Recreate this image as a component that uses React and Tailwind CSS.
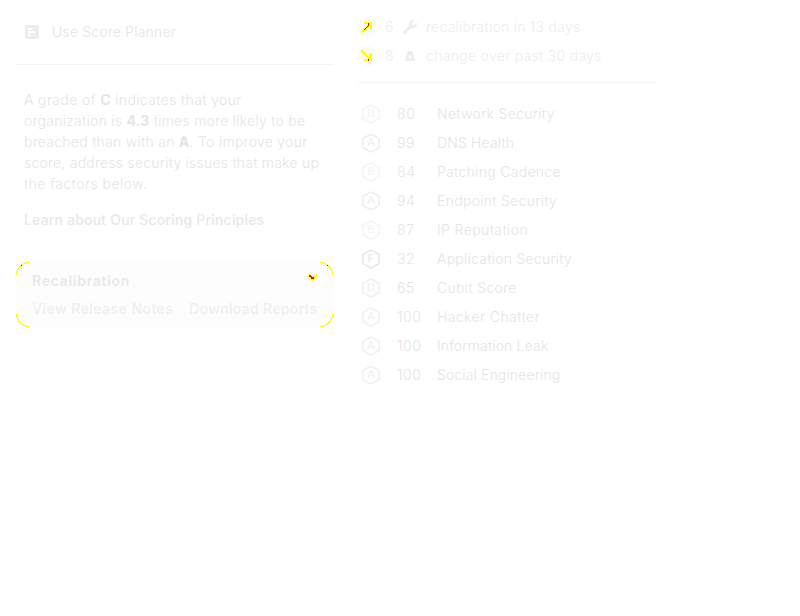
const factors = [
  { grade: 'B', score: 80, name: 'Network Security', tone: 'text-[#f5f5f5]', tracking: 'tracking-[0.3px]' },
  { grade: 'A', score: 99, name: 'DNS Health', tone: 'text-[#efefef]', tracking: 'tracking-[0.15px]' },
  { grade: 'B', score: 84, name: 'Patching Cadence', tone: 'text-[#f5f5f5]', tracking: 'tracking-[0.3px]' },
  { grade: 'A', score: 94, name: 'Endpoint Security', tone: 'text-[#efefef]', tracking: 'tracking-[0.3px]' },
  { grade: 'B', score: 87, name: 'IP Reputation', tone: 'text-[#f5f5f5]', tracking: 'tracking-[0.4px]' },
  { grade: 'F', score: 32, name: 'Application Security', tone: 'text-[#e9e9e9]', tracking: 'tracking-[0.25px]' },
  { grade: 'D', score: 65, name: 'Cubit Score', tone: 'text-[#f1f1f1]', tracking: 'tracking-[0.33px]' },
  { grade: 'A', score: 100, name: 'Hacker Chatter', tone: 'text-[#f1f1f1]', tracking: 'tracking-[0.4px]' },
  { grade: 'A', score: 100, name: 'Information Leak', tone: 'text-[#f1f1f1]', tracking: 'tracking-[0.16px]' },
  { grade: 'A', score: 100, name: 'Social Engineering', tone: 'text-[#f1f1f1]', tracking: 'tracking-[0.13px]' },
];

function GradeBadge({ grade, tone }) {
  return (
    <svg className={`h-5 w-[18px] tracking-normal ${tone}`} viewBox="0 0 18 20" fill="none">
      <path d="M9 1 17.1 5.5v9L9 19 .9 14.5v-9Z" stroke="currentColor" strokeWidth="1.6" strokeLinejoin="round" />
      <text transform="translate(9 13.4) scale(1.15 1)" textAnchor="middle" fontSize="10" fontWeight="500" fill="currentColor">{grade}</text>
    </svg>
  );
}

function Trend({ down }) {
  return (
    <svg className="h-5 w-5" viewBox="0 0 20 20" fill="none" shapeRendering="crispEdges">
      <circle cx="9.5" cy="10" r="9.8" fill="#fafafa" shapeRendering="auto" />
      <g transform={down ? 'matrix(1 0 0 -1 0 20)' : undefined}>
        <path d="M3.5 15.5 12.5 6.5" stroke="#ffff00" strokeWidth="2.4" />
        <path d="M6 5h8v8h-2V7H6Z" fill="#ffff00" />
        {down ? (
          <path d="M10 5h1v2h-1z" fill="#d60000" />
        ) : (
          <path d="M6 12h1v-1h1v-1h1V9h1V8h1v1h-1v1H9v1H8v1H7v1H6zM10 6h1v2h-1z" fill="#d60000" />
        )}
      </g>
    </svg>
  );
}

function CardCorners() {
  return (
    <svg className="pointer-events-none absolute inset-0 h-full w-full" viewBox="0 0 317 65" fill="none" stroke="#ffff00" strokeWidth="1.4" shapeRendering="crispEdges">
      <path d="M.5 13A12.5 12.5 0 0 1 13 .5M304 .5A12.5 12.5 0 0 1 316.5 13M316.5 52A12.5 12.5 0 0 1 304 64.5M13 64.5A12.5 12.5 0 0 1 .5 52" />
      <path d="M5 3h1v1H5zM311 3h1v1h-1z" fill="#b00000" stroke="none" />
    </svg>
  );
}

export default function App() {
  return (
    <main className="flex h-[616px] w-[800px] items-start overflow-hidden bg-white font-['Inter',sans-serif] text-[14px] font-light leading-[21px] tracking-[0.25px] text-[#e5e5e5]">
      <section className="ml-4 w-[317px]">
        <div className="flex h-16 items-center pl-2">
          <svg className="h-4 w-4" viewBox="0 0 16 16" fill="none">
            <rect x="1" y="1" width="14" height="14" rx="2" fill="#ededed" />
            <path d="M4.7 5h2.8M4.7 8h5.8M4.7 11h.9" stroke="white" strokeWidth="1.8" strokeLinecap="round" />
          </svg>
          <span className="-mt-px ml-3 tracking-[0.19px]">Use Score Planner</span>
        </div>
        <div className="h-px bg-[#f4f4f4]" />
        <p className="mt-6 whitespace-nowrap pl-2">
          <span className="tracking-[0.37px]">A grade of <b className="font-bold">C</b> indicates that your</span><br />
          organization is <b className="font-bold">4.3</b> times more likely to be<br />
          <span className="tracking-[0.27px]">breached than with an <b className="font-bold">A</b>. To improve your</span><br />
          <span className="tracking-[0.23px]">score, address security issues that make up</span><br />
          <span className="tracking-[0.45px]">the factors below.</span>
        </p>
        <a className="mt-[15px] block pl-2 font-medium tracking-[0.19px] text-[#e9e9e9]">Learn about Our Scoring Principles</a>
        <div className="relative mt-8 h-[65px] rounded-[13px] bg-[#fdfdfd] px-4 pt-2">
          <CardCorners />
          <div className="flex justify-between">
            <b className="font-semibold tracking-[0.72px] text-[#e9e9e9]">Recalibration</b>
            <svg className="mr-[-1px] mt-[3px] h-2 w-[11px]" viewBox="0 0 11 8" fill="none" shapeRendering="crispEdges">
              <path d="m1 2 4.5 4L10 2" stroke="#ffff00" strokeWidth="3" />
              <path d="M2 2h2v1h1v1h2v2H4V4H3V4H2z" fill="#f00000" />
            </svg>
          </div>
          <div className="mt-[7px] flex gap-4 whitespace-nowrap font-medium tracking-[0.48px] text-[#efefef]">
            <a>View Release Notes</a>
            <a className="tracking-[0.33px]">Download Reports</a>
          </div>
        </div>
      </section>

      <section className="ml-[25px] w-[299px]">
        <div className="flex h-[82px] flex-col pt-3 text-[#ededed]">
          <div className="flex h-[29px] items-center">
            <Trend />
            <span className="ml-[7px] w-[18px]">6</span>
            <svg className="h-[14px] w-[14px]" viewBox="0 0 24 24" fill="#ededed">
              <path d="M1.2 19.4 10.5 10C9.5 7.3 10 4.3 12.3 2.1c2.1-2 5-2.5 7.5-1.4L15.4 5.2l.5 2.9 2.9.5 4.5-4.5c1.1 2.5.6 5.5-1.4 7.6-2.2 2.2-5.3 2.8-7.9 1.8l-9.4 9.3c-1 1-2.4 1-3.4 0-1-1-1-2.4 0-3.4Z" />
            </svg>
            <span className="ml-[9px]">recalibration in 13 days</span>
          </div>
          <div className="flex h-[29px] items-center">
            <Trend down />
            <span className="ml-[7px] w-[18px]">8</span>
            <svg className="h-[14px] w-[14px]" viewBox="0 0 14 14">
              <path fillRule="evenodd" d="M4.5 2h5L12 12H2ZM7 5 5.5 9.5h3Z" fill="#ededed" />
            </svg>
            <span className="ml-[9px] tracking-[0.3px]">change over past 30 days</span>
          </div>
        </div>
        <div className="h-px bg-[#f4f4f4]" />
        <ul className="pt-4">
          {factors.map((f) => (
            <li key={f.name} className="flex h-[29px] items-center pl-1">
              <GradeBadge grade={f.grade} tone={f.tone} />
              <span className="ml-[17px] w-10 tracking-[0.6px]">{f.score}</span>
              <span className={f.tracking}>{f.name}</span>
            </li>
          ))}
        </ul>
      </section>
    </main>
  );
}
